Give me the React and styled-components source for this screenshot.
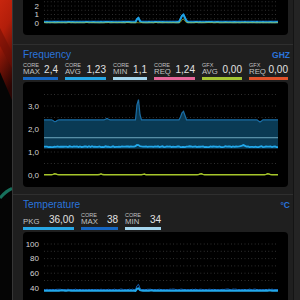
import React from "react";
import styled, { createGlobalStyle } from "styled-components";

const GlobalStyle = createGlobalStyle`
  html, body {
    margin: 0;
    padding: 0;
    background: #000;
  }
  body {
    font-family: "Liberation Sans", Arial, sans-serif;
    overflow: hidden;
  }
`;

const Screen = styled.div`
  display: flex;
  width: 300px;
  height: 300px;
  overflow: hidden;
`;

const Wallpaper = styled.div`
  flex: 0 0 12px;
  height: 300px;

  svg {
    display: block;
  }
`;

const Panel = styled.div`
  flex: 1 1 auto;
  display: flex;
  flex-direction: column;
  background: #1f1f1f;
  border-left: 1px solid #363636;
  overflow: hidden;
`;

const Track = styled.div`
  flex: 0 0 6px;
  background: #242424;
  border-left: 1px solid #141414;
`;

const Section = styled.section`
  flex: 0 0 auto;
  padding: ${(p) => (p.$first ? "0" : "4px")} 5px ${(p) => p.$pb}px 10px;
  border-top: ${(p) => (p.$first ? "none" : "1px solid #2f2f2f")};
`;

const Header = styled.div`
  display: flex;
  justify-content: space-between;
  align-items: baseline;
  height: 12px;
  line-height: 12px;
`;

const Title = styled.div`
  color: #2a74dc;
  font-size: 10.2px;
`;

const Unit = styled.div`
  color: #2a74dc;
  font-size: 8.5px;
  font-weight: bold;
  margin-right: -2px;
`;

const StatRow = styled.div`
  display: flex;
  gap: 7px;
  padding-top: 2px;
`;

const Stat = styled.div`
  width: ${(p) => p.$w}px;
  display: flex;
  justify-content: space-between;
  align-items: flex-end;
  padding-bottom: 2px;
  border-bottom: 3px solid ${(p) => p.$color};
`;

const StatName = styled.div`
  display: flex;
  flex-direction: column;
  color: #c2c2c2;
`;

const Group = styled.span`
  font-size: 5.5px;
  line-height: 5px;
`;

const Kind = styled.span`
  font-size: 7.8px;
  line-height: 7px;
`;

const Value = styled.span`
  font-size: 10px;
  line-height: 10px;
  color: #e2e2e2;
`;

const ChartBox = styled.div`
  margin-top: ${(p) => p.$mt}px;
  height: ${(p) => p.$h}px;
  background: #000;
  border-radius: ${(p) => (p.$cut ? "0 0 4px 4px" : "4px")};
  overflow: hidden;

  svg {
    display: block;
  }
`;

// deterministic wiggle so the lines look like samples
const noise = (i, seed) => {
  const s = Math.sin(i * 12.9898 + seed * 78.233) * 43758.5453;
  return s - Math.floor(s) - 0.5;
};

const bumps = (x, list) =>
  list.reduce((acc, [cx, h, w]) => acc + h * Math.max(0, 1 - Math.abs(x - cx) / w), 0);

const X0 = 21;
const X1 = 255;

const line = (fn, toY) => {
  const pts = [];
  for (let x = X0; x <= X1; x += 1.5) pts.push([x, toY(fn(x))]);
  return pts;
};

const d = (pts) => "M" + pts.map(([x, y]) => `${x.toFixed(1)} ${y.toFixed(2)}`).join("L");

const Grid = ({ ys }) =>
  ys.map((y) => (
    <line key={y} x1={X0} x2={X1} y1={y} y2={y} stroke="#4a4a4a" strokeWidth="0.8" strokeDasharray="0.8 2.6" />
  ));

const AxisLabels = ({ items }) =>
  items.map(([t, y]) => (
    <text
      key={t}
      x="16"
      y={y + 2.8}
      textAnchor="end"
      fill="#d4d4d4"
      fontSize="8"
      fontFamily="Liberation Sans, Arial, sans-serif"
    >
      {t}
    </text>
  ));

function LoadChart() {
  const y = (v) => 23 - v * 8.5;
  const base = line((x) => 0.1 + noise(x, 1) * 0.02 + bumps(x, [[115, 0.6, 2.5], [160, 1.0, 4]]), y);
  const dark = line((x) => 0.22 + bumps(x, [[115, 0.6, 2.5], [160, 1.0, 4]]), y);
  const gfx = line((x) => 0.04 + noise(x, 3) * 0.03 + bumps(x, [[160, 0.5, 3]]), y);
  return (
    <svg width="265" height="35">
      <Grid ys={[1.75, 6, 10.25, 14.5, 18.75]} />
      <AxisLabels items={[["3", y(3)], ["2", y(2)], ["1", y(1)], ["0", y(0)]]} />
      <path d={d(dark)} stroke="#1560b8" strokeWidth="1" fill="none" />
      <path d={d(base)} stroke="#1fa3e4" strokeWidth="2" fill="none" />
      <path d={d(gfx)} stroke="#b4c430" strokeWidth="0.8" fill="none" opacity="0.8" />
    </svg>
  );
}

function FrequencyChart() {
  const y = (v) => 93 - v * 23;
  const max = line(
    (x) =>
      2.4 +
      bumps(x, [
        [32, -0.1, 3],
        [84, 0.06, 2.5],
        [115, 1.1, 2.5],
        [160, 0.43, 3.5],
        [237, -0.1, 3],
      ]),
    y
  );
  const min = line(() => 1.14, y);
  const avg = line((x) => 1.23 + noise(x, 7) * 0.04 + bumps(x, [[115, 0.08, 3], [220, 0.07, 3]]), y);
  const gfx = line(
    (x) => 0.01 + bumps(x, [[32, 0.05, 3], [78, 0.04, 2], [121, 0.04, 2], [178, 0.05, 3], [245, 0.05, 3]]),
    y
  );
  const band = d(max) + "L" + [...min].reverse().map(([a, b]) => `${a} ${b}`).join("L") + "Z";
  return (
    <svg width="265" height="105">
      <Grid ys={[0.5, 1, 1.5, 2, 2.5, 3, 3.5].map(y)} />
      <AxisLabels items={[["3,0", y(3)], ["2,0", y(2)], ["1,0", y(1)], ["0,0", y(0)]]} />
      <path d={band} fill="#0a3a54" />
      <path d={d(max)} stroke="#1a6ea6" strokeWidth="1.2" fill="none" />
      <line x1={X0} x2={X1} y1={y(1.62)} y2={y(1.62)} stroke="#79b4cc" strokeWidth="0.9" />
      <path d={d(avg)} stroke="#22a8ea" strokeWidth="1.8" fill="none" />
      <path d={d(gfx)} stroke="#a6c62a" strokeWidth="1.4" fill="none" />
    </svg>
  );
}

function TemperatureChart() {
  const y = (v) => 12 + (100 - v) * 0.73;
  const maxT = line((x) => 37.5 + Math.max(0, noise(x, 5)) * 1.6 + bumps(x, [[115, 9, 2.5]]), y);
  const pkg = line((x) => 36 + noise(x, 9) * 0.4 + bumps(x, [[115, 4, 2.5]]), y);
  return (
    <svg width="265" height="70">
      <Grid ys={[100, 90, 80, 70, 60, 50].map(y)} />
      <AxisLabels items={[["100", y(100)], ["80", y(80)], ["60", y(60)], ["40", y(40)]]} />
      <path d={d(maxT)} stroke="#1562bc" strokeWidth="1" fill="none" />
      <path d={d(pkg)} stroke="#22a8ea" strokeWidth="2" fill="none" />
    </svg>
  );
}

const freqStats = [
  { group: "CORE", kind: "MAX", value: "2,4", color: "#1667c4", w: 35 },
  { group: "CORE", kind: "AVG", value: "1,23", color: "#27a6e4", w: 41 },
  { group: "CORE", kind: "MIN", value: "1,1", color: "#a6d6ee", w: 34 },
  { group: "CORE", kind: "REQ", value: "1,24", color: "#e7679a", w: 41 },
  { group: "GFX", kind: "AVG", value: "0,00", color: "#a5c534", w: 40 },
  { group: "GFX", kind: "REQ", value: "0,00", color: "#e2532b", w: 39 },
];

const tempStats = [
  { kind: "PKG", value: "36,00", color: "#27a6e4", w: 51 },
  { group: "CORE", kind: "MAX", value: "38", color: "#1667c4", w: 37 },
  { group: "CORE", kind: "MIN", value: "34", color: "#a6d6ee", w: 36 },
];

function Stats({ items }) {
  return (
    <StatRow>
      {items.map((s) => (
        <Stat key={s.group + s.kind} $w={s.w} $color={s.color}>
          <StatName>
            {s.group && <Group>{s.group}</Group>}
            <Kind>{s.kind}</Kind>
          </StatName>
          <Value>{s.value}</Value>
        </Stat>
      ))}
    </StatRow>
  );
}

export default function App() {
  return (
    <>
      <GlobalStyle />
      <Screen>
        <Wallpaper>
          <svg width="12" height="300">
            <defs>
              <linearGradient id="red" x1="0" y1="0" x2="0.2" y2="1">
                <stop offset="0" stopColor="#c8260e" />
                <stop offset="0.35" stopColor="#b21e0a" />
                <stop offset="1" stopColor="#2a0503" />
              </linearGradient>
            </defs>
            <rect width="12" height="300" fill="#050505" />
            <path d="M0 0H12V100L0 72Z" fill="url(#red)" />
            <path d="M0 28L12 52V68L0 46Z" fill="#6e0f06" opacity="0.55" />
            <path d="M0 198Q6 191 12 188.5" stroke="#17705c" strokeWidth="3" fill="none" />
          </svg>
        </Wallpaper>
        <Panel>
          <Section $first $pb={9}>
            <ChartBox $h={35} $mt={0} $cut>
              <LoadChart />
            </ChartBox>
          </Section>
          <Section $pb={7}>
            <Header>
              <Title>Frequency</Title>
              <Unit>GHZ</Unit>
            </Header>
            <Stats items={freqStats} />
            <ChartBox $h={105} $mt={2}>
              <FrequencyChart />
            </ChartBox>
          </Section>
          <Section $pb={0}>
            <Header>
              <Title>Temperature</Title>
              <Unit>°C</Unit>
            </Header>
            <Stats items={tempStats} />
            <ChartBox $h={80} $mt={2}>
              <TemperatureChart />
            </ChartBox>
          </Section>
        </Panel>
        <Track />
      </Screen>
    </>
  );
}
